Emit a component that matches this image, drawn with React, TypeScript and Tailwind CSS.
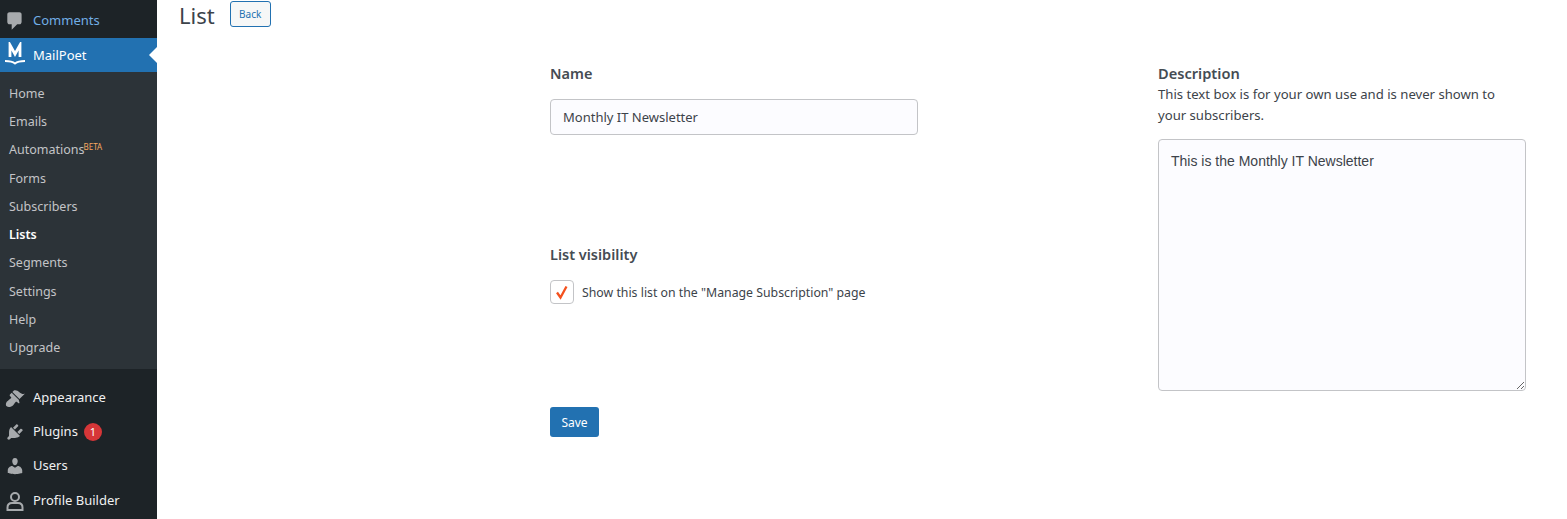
import React from "react";

function Dash({ d, className = "" }: { d: string; className?: string }) {
  return (
    <svg viewBox="0 0 20 20" className={`w-5 h-5 fill-[#a7aaad] ${className}`}>
      <path d={d} />
    </svg>
  );
}

const comments = "M5 2h9q.82 0 1.41.59T16 4v7q0 .82-.59 1.41T14 13h-2l-5 5v-5H5q-.82 0-1.41-.59T3 11V4q0-.82.59-1.41T5 2z";
const appearance = "M14.48 11.06L7.41 3.99l1.5-1.5c.5-.56 2.3-.47 3.51.32 1.21.8 1.43 1.28 2.91 2.1 1.18.64 2.45 1.26 4.45.85zm-.71.71L6.7 4.7 4.93 6.47c-.39.39-.39 1.02 0 1.41l1.06 1.06c.39.39.39 1.03 0 1.42-.6.6-1.43 1.11-2.21 1.69-.35.26-.7.53-1.01.84C1.43 13.23 0 16.6 1.71 18.29c1.69 1.7 5.06.27 6.4-1.07.31-.31.58-.66.84-1.01.58-.78 1.09-1.61 1.69-2.21.39-.39 1.02-.39 1.41 0l1.06 1.06c.39.39 1.02.39 1.41 0z";
const plugins = "M13.11 4.36L9.87 7.6 8 5.73l3.24-3.24c.35-.34 1.05-.2 1.56.32.52.51.66 1.21.31 1.55zm-8 1.77l.91-1.12 9.01 9.01-1.19.84c-.71.71-2.63 1.16-3.82 1.16H6.14L4.9 17.26c-.59.59-1.54.59-2.12 0-.59-.58-.59-1.53 0-2.12l1.24-1.24v-3.88c0-1.13.4-3.19 1.09-3.89zm7.26 3.97l3.24-3.24c.34-.35 1.04-.21 1.55.31.52.51.66 1.21.31 1.55l-3.24 3.25z";
const users = "M10 9.25c-2.27 0-2.73-3.44-2.73-3.44C7 4.02 7.82 2 9.97 2c2.16 0 2.98 2.02 2.71 3.81 0 0-.41 3.44-2.68 3.44zm0 2.57L12.72 10c2.39 0 4.52 2.33 4.52 4.53v2.49s-3.65 1.13-7.24 1.13c-3.65 0-7.24-1.13-7.24-1.13v-2.49c0-2.25 1.94-4.48 4.47-4.48z";

const sub = ["Home", "Emails", "Automations", "Forms", "Subscribers", "Lists", "Segments", "Settings", "Help", "Upgrade"];

function Row({ icon, children }: { icon: React.ReactNode; children: React.ReactNode }) {
  return (
    <div className="h-[34.3px] flex items-center text-[13px] text-[#f0f0f1]">
      <div className="w-[33px] pl-[5px] shrink-0 flex">{icon}</div>
      {children}
    </div>
  );
}

export default function App() {
  return (
    <div className="flex h-[519px] overflow-hidden bg-white font-['Noto_Sans',sans-serif] text-[#3c434a]">
      <aside className="w-[157px] shrink-0 bg-[#1d2327] flex flex-col">
        <div className="h-[38px] pt-[4px] flex items-center text-[13px] text-[#72aee6]">
          <div className="w-[33px] pl-[4px] shrink-0 flex"><Dash d={comments} className="fill-[#8c9aa8] w-[22px] h-[22px]" /></div>
          Comments
        </div>
        <div className="relative h-[34px] pt-[2px] bg-[#2271b1] flex items-center text-[13px] text-white">
          <div className="w-[33px] pl-[4px] shrink-0 flex -mt-[2px]">
            <svg viewBox="0 0 22 26" className="w-[22px] h-[26px] fill-none stroke-white">
              <path d="M6 15V3L11 12 16 3V15" strokeWidth="2.800" />
              <path d="M1 19c4 0 7 0 10 2.500C14 19 17 19 21 19" strokeWidth="1.800" />
            </svg>
          </div>
          MailPoet
          <span className="absolute right-0 top-[9px] border-y-[8px] border-y-transparent border-r-[8px] border-r-white" />
        </div>
        <div className="bg-[#2c3338] h-[297px] pt-[8px] flex flex-col">
          {sub.map((s) => (
            <div
              key={s}
              className={`h-[28.250px] shrink-0 flex items-center pl-[9px] text-[12.500px] ${s === "Lists" ? "text-white font-semibold" : "text-[#c3c4c7]"}`}
            >
              {s}
              {s === "Automations" && <sup className="text-[8px] text-[#f7a860] top-[-4px] -ml-[1px]">BETA</sup>}
            </div>
          ))}
        </div>
        <div className="pt-[11.500px] flex flex-col">
          <Row icon={<Dash d={appearance} />}>Appearance</Row>
          <Row icon={<Dash d={plugins} />}>
            Plugins
            <span className="ml-[6px] w-[18px] h-[18px] rounded-full bg-[#d63638] text-white text-[11px] flex items-center justify-center">1</span>
          </Row>
          <Row icon={<Dash d={users} />}>Users</Row>
          <Row
            icon={
              <svg viewBox="0 0 20 20" className="w-5 h-5 fill-none stroke-[#a7aaad]" strokeWidth="2">
                <circle cx="10" cy="6" r="4" />
                <path d="M2.5 19v-2.5c0-3 2-4.5 4.5-4.5h6c2.500 0 4.500 1.500 4.500 4.500V19z" />
              </svg>
            }
          >
            Profile Builder
          </Row>
        </div>
      </aside>

      <main className="flex-1 min-w-0">
        <div className="flex items-start pl-[22px] h-[65px]">
          <h1 className="text-[22px] leading-[30px] text-[#3c434a]">List</h1>
          <button className="ml-[15px] mt-[1px] h-[26px] w-[41px] border border-[#2271b1] rounded-[3px] bg-[#f6f7f7] text-[#2271b1] text-[10px]">Back</button>
        </div>
        <div className="ml-[393px] flex gap-[240px]">
          <div className="w-[368px] shrink-0 flex flex-col">
            <label className="text-[14.500px] leading-[16px] font-semibold text-[#454c53]">Name</label>
            <input
              defaultValue="Monthly IT Newsletter"
              className="mt-[18px] h-[36px] w-full border border-[#c3c4c7] rounded-[4px] bg-[#fcfcff] px-3 text-[13px] text-[#3c434a] outline-none"
            />
            <label className="mt-[111px] text-[14.500px] leading-[16px] font-semibold text-[#454c53]">List visibility</label>
            <div className="mt-[18px] flex items-center">
              <span className="w-6 h-6 border border-[#c3c4c7] rounded-[4px] bg-white flex items-center justify-center">
                <svg viewBox="0 0 14 16" className="w-[14px] h-4 fill-none stroke-[#f4511e]" strokeWidth="2.300">
                  <path d="M2 8.500L5.500 13.500 11.500 2.500" />
                </svg>
              </span>
              <span className="ml-2 text-[12.300px] translate-y-px">Show this list on the "Manage Subscription" page</span>
            </div>
            <button className="mt-[103px] w-[49px] h-[30px] pt-px rounded-[3px] bg-[#2271b1] text-white text-[12px]">Save</button>
          </div>
          <div className="w-[368px] shrink-0 flex flex-col -mt-[1px]">
            <label className="text-[14.600px] leading-[18px] font-semibold text-[#454c53]">Description</label>
            <p className="text-[13.130px] leading-[21px] max-w-[345px] mt-[2px]">This text box is for your own use and is never shown to your subscribers.</p>
            <textarea
              defaultValue="This is the Monthly IT Newsletter"
              className="mt-[13px] h-[252px] w-full border border-[#c3c4c7] rounded-[4px] bg-[#fcfcff] px-3 py-[11px] text-[14px] leading-[20px] text-[#3c434a] font-['Liberation_Sans',sans-serif] outline-none"
            />
          </div>
        </div>
      </main>
    </div>
  );
}
